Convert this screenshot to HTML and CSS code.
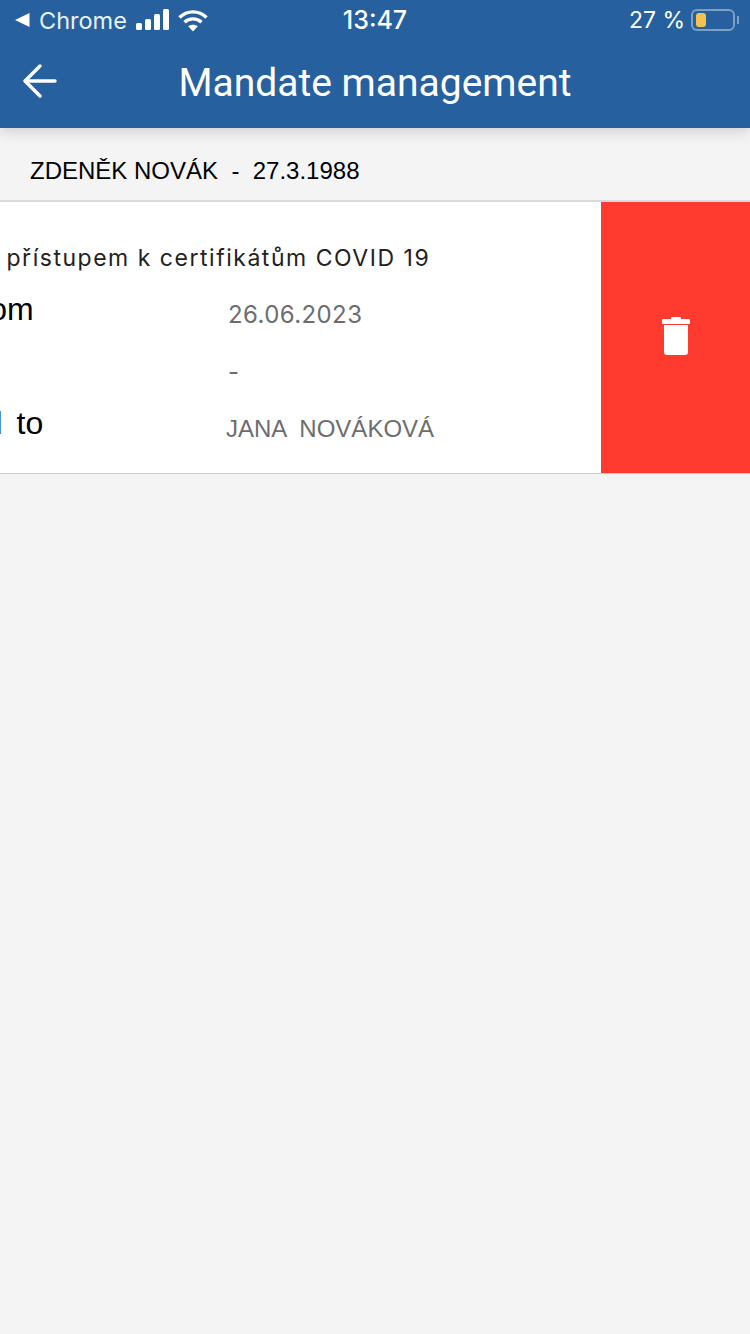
FILE: index.html
```html
<!DOCTYPE html>
<html lang="en">

<head>
    <meta charset="UTF-8" />
    <meta name="viewport" content="width=device-width, initial-scale=1.0" />
    <title>Mandate management</title>
    <link rel="stylesheet" href="styles.css">
</head>

<body>
    <header class="app-header">
        <!-- Status bar -->
        <div class="status-bar">
            <div class="status-left">
                <svg class="icon-back-app" width="16" height="16" viewBox="0 0 16 16"><path d="M15.5 1v14L1 8z" fill="#fff"/></svg>
                <span class="carrier">Chrome</span>
                <svg class="icon-signal" width="34" height="22" viewBox="0 0 34 22" fill="#fff">
                    <rect x="0" y="14" width="6" height="7" rx="1.5"/>
                    <rect x="9" y="10" width="6" height="11" rx="1.5"/>
                    <rect x="18" y="5" width="6" height="16" rx="1.5"/>
                    <rect x="27" y="0" width="6" height="21" rx="1.5"/>
                </svg>
                <svg class="icon-wifi" width="30" height="23" viewBox="0 0 30 23" fill="none" stroke="#fff" stroke-width="3.4">
                    <path d="M1.5 8.5C9 1 21 1 28.5 8.5"/>
                    <path d="M6.5 13.2C11.3 8.8 18.7 8.8 23.5 13.2"/>
                    <path d="M15 22.5l-4.8-5.2c2.8-2 6.8-2 9.6 0z" fill="#fff" stroke="none"/>
                </svg>
            </div>
            <div class="status-time">13:47</div>
            <div class="status-right">
                <span>27 %</span>
                <div class="battery"><div class="battery-level"></div></div>
                <div class="battery-tip"></div>
            </div>
        </div>

        <!-- Title bar -->
        <div class="title-bar">
            <svg class="icon-arrow" width="34" height="34" viewBox="0 0 34 34" fill="none" stroke="#fff" stroke-width="3.4" stroke-linecap="round" stroke-linejoin="round">
                <path d="M32 17H3"/>
                <path d="M17 2L2 17l15 15"/>
            </svg>
            <h1>Mandate management</h1>
        </div>
    </header>

    <div class="person">ZDENĚK NOVÁK &nbsp;-&nbsp; 27.3.1988</div>

    <!-- Swiped row, delete action showing -->
    <div class="mandate-row">
        <div class="mandate-content">
            <div class="mandate-name">Zmocnění s přístupem k certifikátům COVID 19</div>
            <div class="mandate-line">
                <span class="line-label">Valid from</span>
                <span class="line-value">26.06.2023</span>
            </div>
            <div class="mandate-line">
                <span class="line-label">Valid to</span>
                <span class="line-value">-</span>
            </div>
            <div class="mandate-line">
                <span class="line-label line-label-wide">Granted to</span>
                <span class="line-value line-name">JANA &nbsp;NOVÁKOVÁ</span>
            </div>
        </div>
        <div class="delete-action">
            <svg width="28" height="38" viewBox="0 0 28 38" fill="#fff">
                <path d="M10 0h8a1 1 0 0 1 1 1v1h8a1 1 0 0 1 1 1v3a1 1 0 0 1-1 1H1a1 1 0 0 1-1-1V3a1 1 0 0 1 1-1h8V1a1 1 0 0 1 1-1z"/>
                <path d="M2 8h24v27a3 3 0 0 1-3 3H5a3 3 0 0 1-3-3z"/>
            </svg>
        </div>
    </div>
</body>

</html>
```

FILE: styles.css
```css
* {
    margin: 0;
    padding: 0;
    box-sizing: border-box;
}

body {
    width: 750px;
    height: 1334px;
    overflow: hidden;
    background-color: #f4f4f4;
    font-family: "Liberation Sans", sans-serif;
}

/* Header */

.app-header {
    background-color: #26609f;
    color: #fff;
    height: 128px;
    box-shadow: 0 3px 14px rgba(0, 0, 0, 0.16);
}

.status-bar {
    display: grid;
    grid-template-columns: 1fr auto 1fr;
    align-items: center;
    height: 40px;
    padding: 0 11px;
    font-family: "Inter", sans-serif;
    font-size: 23px;
}

.status-left {
    display: flex;
    align-items: center;
    padding-left: 3px;
}

.carrier {
    margin-left: 9px;
    font-size: 23.5px;
    color: #e8f1f8;
}

.icon-signal {
    margin-left: 9px;
}

.icon-wifi {
    margin-left: 8px;
}

.status-time {
    font-size: 25px;
    font-weight: 500;
}

.status-right {
    display: flex;
    align-items: center;
    justify-content: flex-end;
}

.battery {
    width: 44px;
    height: 22px;
    margin-left: 6px;
    padding: 2px 3px;
    border: 2px solid #7d9fc4;
    border-radius: 6px;
}

.battery-level {
    width: 10px;
    height: 100%;
    background-color: #f4c152;
    border-radius: 3px;
}

.battery-tip {
    width: 2px;
    height: 8px;
    margin-left: 2px;
    background-color: #7d9fc4;
}

.title-bar {
    display: grid;
    grid-template-columns: 1fr auto 1fr;
    align-items: center;
    height: 88px;
    padding-left: 23px;
}

.title-bar h1 {
    font-family: "Roboto", sans-serif;
    font-size: 39px;
    font-weight: 400;
    margin-left: -23px;
    padding-bottom: 2px;
}

.icon-arrow {
    margin-top: -6px;
}

/* Person line */

.person {
    height: 74px;
    padding: 29px 0 0 30px;
    font-size: 24px;
    line-height: 28px;
    color: #000;
    border-bottom: 2px solid #d6dade;
}

/* Mandate row */

.mandate-row {
    display: flex;
    height: 272px;
    overflow: hidden;
    background-color: #fff;
    border-bottom: 1px solid #cccccc;
}

.mandate-content {
    flex: none;
    width: 751px;
    margin-left: -150px;
    padding: 41px 0 0 42px;
}

.mandate-name {
    margin-left: -35px;
    margin-bottom: 13px;
    font-family: "Inter", sans-serif;
    font-size: 23px;
    line-height: 30px;
    letter-spacing: 1.52px;
    color: #222;
    white-space: nowrap;
}

.mandate-line {
    display: flex;
    align-items: center;
    height: 57px;
}

.line-label {
    width: 336px;
    flex: none;
    margin-bottom: 10px;
    font-size: 32px;
    color: #000;
}

.line-label-wide {
    width: 341px;
    margin-left: -5px;
    word-spacing: 5px;
}

.line-value {
    font-family: "Inter", sans-serif;
    font-size: 24px;
    letter-spacing: 0.4px;
    color: #6d6d6d;
}

.line-name {
    margin-left: -2px;
    font-family: "Liberation Sans", sans-serif;
    font-size: 24px;
    letter-spacing: 0;
}

.delete-action {
    flex: none;
    display: flex;
    align-items: center;
    justify-content: center;
    width: 149px;
    padding-bottom: 3px;
    background-color: #ff3b30;
}
```
